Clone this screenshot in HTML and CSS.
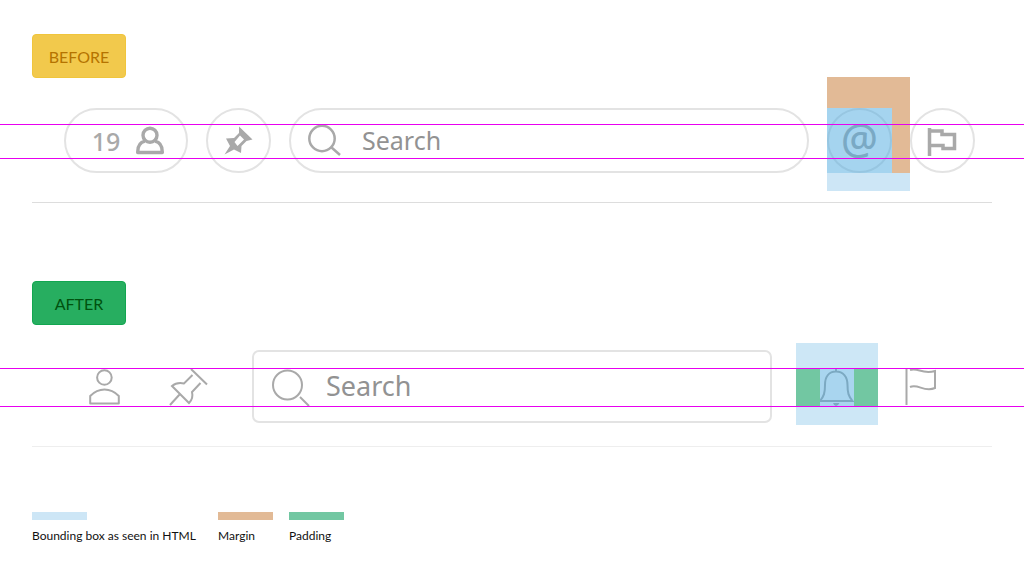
FILE: index.html
```html
<!DOCTYPE html>
<html lang="en">
<head>
<meta charset="utf-8">
<meta name="viewport" content="width=device-width, initial-scale=1">
<title>Toolbar alignment</title>
<link rel="stylesheet" href="styles.css">
</head>
<body>
<main class="page">
  <section class="before">
    <h2 class="tag tag-before">BEFORE</h2>
    <div class="toolbar toolbar-before">
      <button class="pill" aria-label="19 people"><span class="count">19</span>
        <svg width="28" height="30" viewBox="0 0 28 30"><g fill="none" stroke="#a9a9a9" stroke-width="3.4"><circle cx="14" cy="9.200" r="7"/><path d="M9 15.200C4 16.200 1.700 19.500 1.700 26V26.500H26.300V26C26.300 19.500 24 16.200 19 15.200" stroke-linejoin="round"/></g></svg>
      </button>
      <button class="round" aria-label="Pinned">
        <svg width="40" height="40" viewBox="0 0 40 40"><path fill="#a9a9a9" fill-rule="evenodd" d="M20 5.500L33.500 18.500L27.500 20L22.500 25L22 32L15 28.500L5.500 33.500L11 25L7 17.500L15 17L20 12ZM21 14.500L15.500 21L18.500 25L25 18.500Z"/></svg>
      </button>
      <label class="search search-round">
        <svg width="34" height="34" viewBox="0 0 34 34"><g fill="none" stroke="#a9a9a9" stroke-width="2.500"><circle cx="14" cy="14.500" r="12.700"/><path d="M23 23L32 31"/></g></svg>
        <input type="search" placeholder="Search" aria-label="Search">
      </label>
      <button class="round marked" aria-label="Mentions"><span class="at">@</span>
        <span class="margin-box"></span><span class="outer-box"></span><span class="inner-box"></span>
      </button>
      <button class="round" aria-label="Flagged">
        <svg width="44" height="40" viewBox="0 0 44 40"><path fill="none" stroke="#a9a9a9" stroke-width="3.500" d="M8.500 7V35M8.500 10H21V13.500H33.500V27.500H22V24.500H8.500"/></svg>
      </button>
      <span class="guide guide-top"></span><span class="guide guide-bottom"></span>
    </div>
  </section>
  <section class="after">
    <h2 class="tag tag-after">AFTER</h2>
    <div class="toolbar toolbar-after">
      <button class="plain" aria-label="People">
        <svg width="32" height="38" viewBox="0 0 32 38"><g fill="none" stroke="#a9a9a9" stroke-width="2"><circle cx="16.400" cy="9.500" r="7.300"/><path d="M2.200 35.500V28Q8.500 21.500 16.500 21.500T30.800 28V35.500Z" stroke-linejoin="round"/></g></svg>
      </button>
      <button class="plain" aria-label="Pinned">
        <svg width="50" height="38" viewBox="0 0 50 38"><path fill="none" stroke="#a9a9a9" stroke-width="2" d="M27 1L43 16.500M28.500 7L20 15.500C15 14.500 11 15.500 8 18L25 35C28 32 29 28 28 24L36.500 15M16 26L6 37"/></svg>
      </button>
      <label class="search search-square">
        <svg width="40" height="38" viewBox="0 0 40 38"><g fill="none" stroke="#a9a9a9" stroke-width="2"><circle cx="17.500" cy="17" r="14.500"/><path d="M30 29L39 38"/></g></svg>
        <input type="search" placeholder="Search" aria-label="Search">
      </label>
      <button class="bell" aria-label="Notifications">
        <svg width="36" height="38" viewBox="0 0 36 38"><g fill="none" stroke="#a9a9a9" stroke-width="2"><path d="M17 0V3M6 17C6 8.500 10 3.500 17 3.500S28.500 8.500 28.500 17C28.500 25 29.500 28 33.500 33H1C5 28 6 25 6 17Z"/></g><path fill="#a9a9a9" d="M14 35H20.500Q19 38 17 38T14 35Z"/></svg>
        <span class="bell-box"></span><span class="pad-box pad-left"></span><span class="glyph-box"></span><span class="pad-box pad-right"></span>
      </button>
      <button class="plain" aria-label="Flagged">
        <svg width="34" height="38" viewBox="0 0 34 38"><path fill="none" stroke="#a9a9a9" stroke-width="2" d="M2.500 1V37M6 2C14 -1 18 7 31 3V20C20 25 14 15 6 19"/></svg>
      </button>
      <span class="guide guide-top"></span><span class="guide guide-bottom"></span>
    </div>
  </section>
  <ul class="legend">
    <li><span class="swatch swatch-box"></span>Bounding box as seen in HTML</li>
    <li><span class="swatch swatch-margin"></span>Margin</li>
    <li><span class="swatch swatch-padding"></span>Padding</li>
  </ul>
</main>
</body>
</html>
```
FILE: styles.css
```css
* { box-sizing: border-box; }
body { margin: 0; background: #fff; color: #111; font-family: Lato, "Open Sans", sans-serif; }
button { padding: 0; border: 0; background: none; color: inherit; font: inherit; }
svg { display: block; flex: none; }
.page { padding: 34px 32px; }
.tag { display: flex; align-items: center; justify-content: center; width: 94px; height: 44px; margin: 0; border: 1px solid; border-radius: 4px; font-size: 16px; font-weight: 400; }
.tag-before { background: #f2c94c; border-color: #f0c53c; color: #b57300; }
.tag-after { background: #27ae60; border-color: #12a650; color: #00520f; }
.toolbar { position: relative; display: flex; align-items: center; }
.toolbar-before { gap: 18px; padding: 30px 17px 29px 32px; border-bottom: 1px solid #ddd; }
.pill, .round, .search { display: flex; align-items: center; border: 2px solid #e3e3e3; }
.pill, .round { justify-content: center; height: 65px; border-radius: 33px; flex: none; }
.pill { width: 124px; gap: 16px; padding-left: 4px; }
.round { position: relative; width: 65px; }
.count { color: #a9a9a9; font: 500 25px/32px "Noto Sans", sans-serif; }
.search { flex: 1; min-width: 0; }
.search input { flex: 1; min-width: 0; padding: 0 0 2px; border: 0; outline: 0; background: none; color: #929292; font-family: "Noto Sans", sans-serif; }
.search input::placeholder { color: #929292; opacity: 1; }
.search-round { height: 65px; gap: 20px; padding: 0 17px; border-radius: 33px; }
.search-round input { font-size: 25px; }
.at { padding-bottom: 6px; color: #a9a9a9; font: 500 41px/44px "Noto Sans", sans-serif; }
.margin-box, .outer-box, .inner-box, .bell-box, .pad-box, .glyph-box, .guide { position: absolute; }
.margin-box { left: -2px; top: -33px; width: 83px; height: 96px; background: #e2ba96; clip-path: polygon(0 0, 100% 0, 100% 100%, 65px 100%, 65px 31px, 0 31px); }
.outer-box { left: -2px; top: 63px; width: 83px; height: 18px; background: #cde6f6; }
.inner-box { left: -2px; top: -2px; width: 65px; height: 65px; background: #4ca9df80; }
.guide { left: -32px; right: -32px; height: 1px; background: #e800f0; }
.toolbar-before .guide-top { top: 46px; }
.toolbar-before .guide-bottom { top: 80px; }
.after { margin-top: 78px; }
.toolbar-after { padding: 25px 54px 23px 56px; border-bottom: 1px solid #eee; }
.plain { flex: none; }
.plain + .plain { margin: 0 38px 0 44px; }
.search-square { height: 73px; gap: 16px; padding: 0 16px; border-radius: 7px; }
.search-square input { font-size: 27px; }
.bell { position: relative; display: flex; align-items: flex-start; justify-content: center; align-self: flex-start; flex: none; width: 82px; height: 82px; margin: -7px 26px -2px 24px; padding-top: 25px; }
.bell-box { inset: 0; background: #4ca9df47; }
.pad-box { top: 25px; width: 24px; height: 38px; background: #72c7a2; }
.pad-left { left: 0; }
.pad-right { right: 0; }
.glyph-box { left: 24px; top: 25px; width: 34px; height: 38px; background: #4ca9df47; }
.toolbar-after .guide-top { top: 43px; }
.toolbar-after .guide-bottom { top: 81px; }
.legend { display: flex; gap: 16px; margin: 65px 0 0; padding: 0; list-style: none; font-size: 12px; line-height: 16px; }
.legend li:first-child { min-width: 170px; }
.swatch { display: block; width: 55px; height: 8px; margin-bottom: 8px; }
.swatch-box { background: #cde6f6; }
.swatch-margin { background: #e2ba96; }
.swatch-padding { background: #72c7a2; }
```
